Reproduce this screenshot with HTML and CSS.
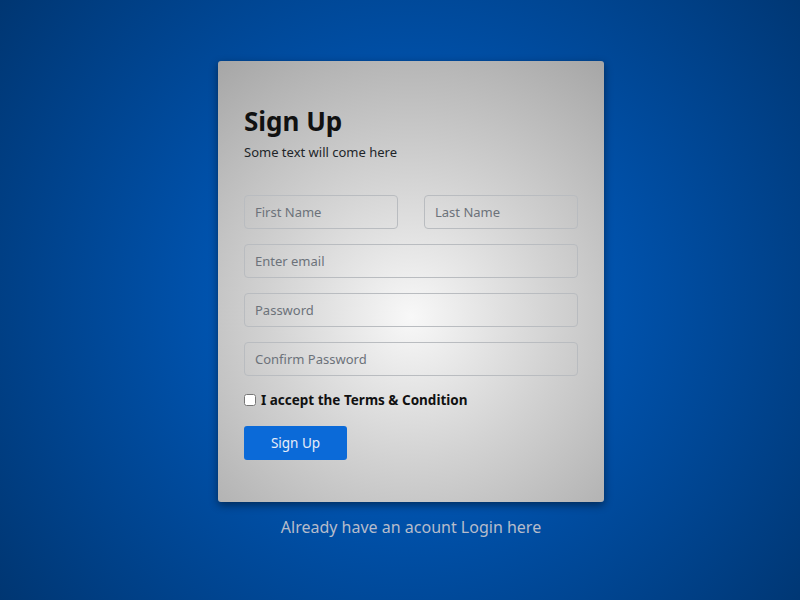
FILE: index.html
```html
<!DOCTYPE html>
<html>
<head>
  <meta charset="UTF-8">
  <title>Sign Up</title>
  <link rel="stylesheet" href="styles.css">
</head>
<body>
  <div class="page">
    <div class="card">
      <h1>Sign Up</h1>
      <p class="lead">Some text will come here</p>
      <form class="signup-form">
        <div class="row">
          <input type="text" placeholder="First Name">
          <input type="text" placeholder="Last Name">
        </div>
        <input type="email" placeholder="Enter email">
        <input type="password" placeholder="Password">
        <input type="password" placeholder="Confirm Password">
        <label class="terms"><input type="checkbox"> I accept the Terms &amp; Condition</label>
        <button type="submit" class="btn">Sign Up</button>
      </form>
    </div>
    <a href="#" class="login-link">Already have an acount Login here</a>
  </div>
</body>
</html>
```
FILE: styles.css
```css
html, body {
  height: 100%;
}

body {
  margin: 0;
  font-family: 'Noto Sans', 'Open Sans', sans-serif;
  background: radial-gradient(circle at 51% 50%, #0066d2 0%, #0050a8 45%, #003672 100%);
  color: #212529;
}

.page {
  display: flex;
  flex-direction: column;
  align-items: center;
  padding: 61px 0 0 22px;
}

.card {
  width: 386px;
  box-sizing: border-box;
  padding: 44px 26px 42px;
  border-radius: 3px;
  background: radial-gradient(circle at 50% 58%, #f8f8f8 0%, #d2d2d2 45%, #a6a6a6 100%);
  box-shadow: 0 3px 8px rgba(0, 0, 0, 0.45);
}

h1 {
  margin: 0;
  font-size: 26px;
  font-weight: 700;
  line-height: 32px;
  color: #111;
}

.lead {
  margin: 5px 0 0;
  font-size: 13px;
  line-height: 20px;
}

.signup-form {
  display: flex;
  flex-direction: column;
  gap: 15px;
  margin-top: 33px;
}

.row {
  display: flex;
  gap: 26px;
}

.row input {
  width: 154px;
}

.signup-form input[type="text"],
.signup-form input[type="email"],
.signup-form input[type="password"] {
  height: 34px;
  box-sizing: border-box;
  padding: 0 10px;
  border: 1px solid #b9bcc0;
  border-radius: 4px;
  background: transparent;
  font-family: inherit;
  font-size: 13px;
  color: #333;
}

.signup-form input::placeholder {
  color: #6c727a;
}

.terms {
  display: flex;
  align-items: center;
  gap: 5px;
  font-size: 13.5px;
  font-weight: 700;
  color: #111;
}

.terms input {
  margin: 0;
  width: 12px;
  height: 12px;
}

.btn {
  width: 103px;
  height: 34px;
  margin-top: 2px;
  border: none;
  border-radius: 3px;
  background-color: #0b6ad8;
  color: #e8eef8;
  font-family: inherit;
  font-size: 13.5px;
  cursor: pointer;
}

.login-link {
  margin-top: 14px;
  font-size: 16px;
  color: #b6bccb;
  text-decoration: none;
}
```
